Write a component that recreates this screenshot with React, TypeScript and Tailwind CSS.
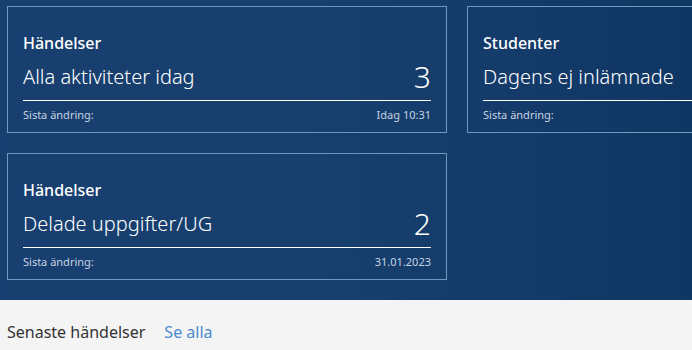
import React from "react";

function Card({ category, title, count, date }: { category: string; title: string; count?: string; date?: string }) {
  return (
    <div className="w-[440px] h-[127px] shrink-0 border border-[#6f98bd] px-[15px] pt-[26px] flex flex-col">
      <div className="text-[16px] leading-[20px] font-medium text-white">{category}</div>
      <div className="flex items-end justify-between mt-[10px] h-[38px] border-b border-white">
        <div className="text-[20px] leading-[28px] mb-[9px] font-light text-white whitespace-nowrap">{title}</div>
        {count && <div className="text-[30px] leading-[34px] font-light text-white mb-[6px]">{count}</div>}
      </div>
      <div className="flex justify-between text-[11px] leading-[14px] text-[#c6d4e3] mt-[7px]">
        <span>Sista ändring:</span>
        <span>{date}</span>
      </div>
    </div>
  );
}

export default function App() {
  return (
    <div className="w-[692px] h-[350px] overflow-hidden bg-[#f4f4f4]" style={{ fontFamily: '"Noto Sans", "Open Sans", sans-serif' }}>
      <div className="h-[300px] bg-gradient-to-r from-[#183f6f] via-[#173f6e] to-[#103664] pl-[7px] pt-[6px] flex flex-col gap-[20px] overflow-hidden">
        <div className="flex gap-[20px]">
          <Card category="Händelser" title="Alla aktiviteter idag" count="3" date="Idag 10:31" />
          <Card category="Studenter" title="Dagens ej inlämnade" />
        </div>
        <div className="flex">
          <Card category="Händelser" title="Delade uppgifter/UG" count="2" date="31.01.2023" />
        </div>
      </div>
      <div className="flex items-center gap-[19px] pl-[7px] pt-[20px] text-[16px] leading-[24px]">
        <span className="text-[#333333]">Senaste händelser</span>
        <span className="text-[#4a8ad0]">Se alla</span>
      </div>
    </div>
  );
}
